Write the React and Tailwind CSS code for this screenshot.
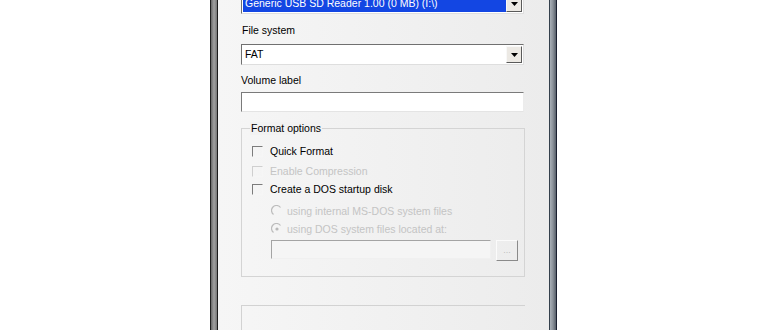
import React from 'react';

const font = { fontFamily: '"Liberation Sans", Arial, sans-serif' };

function DropArrow() {
  return (
    <div className="w-[16px] h-[17px] shrink-0 flex items-center justify-center bg-[#ece9e4] border-t border-l border-t-[#f8f8f8] border-l-[#f8f8f8] border-b border-r border-b-[#5a5a5a] border-r-[#5a5a5a]">
      <svg width="7" height="4" viewBox="0 0 7 4">
        <path d="M0 0h7L3.5 4z" fill="#000" />
      </svg>
    </div>
  );
}

function Combo({ children, selected }) {
  return (
    <div className="w-[283px] h-[21px] flex items-center bg-white border-t border-l border-t-[#707070] border-l-[#707070] border-b border-r border-b-[#dedede] border-r-[#dedede] pl-[1px] pr-[1px]">
      <div
        className={
          selected
            ? 'flex-1 h-[17px] flex items-center bg-[#1346e3] text-white pl-[2px]'
            : 'flex-1 h-[17px] flex items-center text-black pl-[2px]'
        }
      >
        {children}
      </div>
      <DropArrow />
    </div>
  );
}

function Check({ label, disabled }) {
  return (
    <div className="flex items-center h-[16px] pl-[10px]">
      <div
        className={
          disabled
            ? 'w-[11px] h-[11px] border-t border-l border-t-[#cfcfcf] border-l-[#cfcfcf] border-b border-r border-b-[#f6f6f6] border-r-[#f6f6f6]'
            : 'w-[11px] h-[11px] border-t border-l border-t-[#7c7c7c] border-l-[#7c7c7c] border-b border-r border-b-[#f6f6f6] border-r-[#f6f6f6]'
        }
      />
      <span className={disabled ? 'ml-[7px] text-[#c4c4c4]' : 'ml-[7px] text-black'}>{label}</span>
    </div>
  );
}

function Radio({ label, checked }) {
  return (
    <div className="flex items-center h-[16px] pl-[29px]">
      <svg width="12" height="12" viewBox="0 0 12 12">
        <path d="M9.5 2.5A5 5 0 1 0 2.5 9.5" fill="none" stroke="#bcbcbc" strokeWidth="1.2" />
        {checked && <circle cx="6" cy="6" r="1.6" fill="#b8b8b8" />}
      </svg>
      <span className="ml-[4px] text-[#c4c4c4]">{label}</span>
    </div>
  );
}

export default function App() {
  return (
    <div className="w-[770px] h-[330px] bg-white overflow-hidden flex text-[10.5px] leading-[13px]" style={font}>
      <div className="w-[210px] shrink-0" />
      {/* left frame */}
      <div className="w-[8px] h-full shrink-0 border-l border-r border-l-[#222] border-r-[#1c1c1c] bg-gradient-to-r from-[#6a6a6a] via-[#a2a2a2] to-[#777]" />
      {/* client area */}
      <div className="w-[331px] h-full shrink-0 overflow-hidden bg-gradient-to-r from-[#f6f6f6] to-[#ececec] pl-[23px]">
        <div className="mt-[-7px]">
          <Combo selected>Generic USB SD Reader 1.00 (0 MB) (I:\)</Combo>
        </div>
        <div className="mt-[10px] h-[13px] pl-[1px]">File system</div>
        <div className="mt-[7px]">
          <Combo>FAT</Combo>
        </div>
        <div className="mt-[9px] h-[13px]">Volume label</div>
        <div className="mt-[5px] w-[283px] h-[20px] bg-white border-t border-l border-t-[#7a7a7a] border-l-[#7a7a7a] border-b border-r border-b-[#e4e4e4] border-r-[#ececec]" />

        {/* Format options group */}
        <div className="relative mt-[16px] w-[284px] h-[149px] border border-[#d4d4d4]">
          <span className="absolute left-[8px] top-[-7px] px-[1px] bg-[#f2f2f2] text-black">Format options</span>
          <div className="pt-[14px]">
            <Check label="Quick Format" />
            <div className="mt-[4px]">
              <Check label="Enable Compression" disabled />
            </div>
            <div className="mt-[2px]">
              <Check label="Create a DOS startup disk" />
            </div>
            <div className="mt-[6px]">
              <Radio label="using internal MS-DOS system files" />
            </div>
            <div className="mt-[2px]">
              <Radio label="using DOS system files located at:" checked />
            </div>
            <div className="mt-[3px] flex items-start pl-[29px]">
              <div className="w-[220px] h-[19px] bg-[#f5f5f5] border-t border-l border-t-[#a4a4a4] border-l-[#a4a4a4] border-b border-r border-b-[#f0f0f0] border-r-[#f0f0f0]" />
              <div className="ml-[5px] w-[22px] h-[21px] flex items-center justify-center border-t border-l border-t-[#fbfbfb] border-l-[#fbfbfb] border-b border-r border-b-[#8a8a8a] border-r-[#8a8a8a] text-[#bdbdbd] text-[9px]">
                ...
              </div>
            </div>
          </div>
        </div>

        <div className="mt-[28px] w-[284px] h-[60px] border-t border-l border-[#d2d2d2]" />
      </div>
      {/* right frame */}
      <div className="w-[8px] h-full shrink-0 border-l border-r border-l-[#34404c] border-r-[#1a2030] bg-gradient-to-r from-[#a9b0b7] via-[#8a9199] to-[#58606a]" />
    </div>
  );
}
